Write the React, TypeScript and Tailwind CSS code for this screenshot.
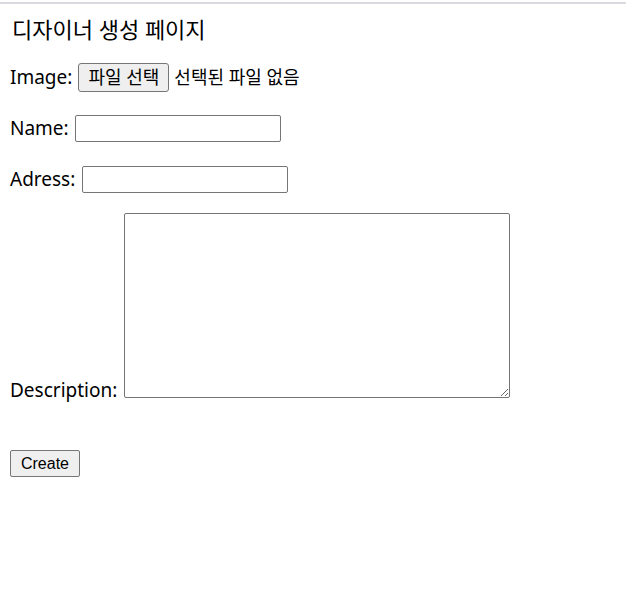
import React from "react";

const labelFont = "[font-family:'Noto_Sans','Noto_Sans_CJK_KR',sans-serif]";

const App = () => {
  return (
    <div className="min-h-[591px] bg-white text-black">
      <div className="mt-[2px] border-t-2 border-[#dcdae0]" />
      <div className={`px-[10px] ${labelFont}`}>
        {/* title */}
        <h1 className="pt-[11px] pl-[2px] text-[22px] leading-[28px] font-normal">
          디자이너 생성 페이지
        </h1>

        {/* image */}
        <div className="mt-[19px] flex items-center h-[30px] text-[19px]">
          <span>Image:</span>
          <button className="ml-[6px] h-[29px] w-[91px] rounded-[3px] border border-[#767676] bg-[#efefef] text-[18px] leading-none">
            파일 선택
          </button>
          <span className="ml-[5px] text-[18px]">선택된 파일 없음</span>
        </div>

        {/* name */}
        <div className="mt-[21px] flex items-center h-[30px] text-[19px]">
          <span>Name:</span>
          <input className="ml-[6px] w-[206px] h-[27px] rounded-[2px] border border-[#767676] bg-white" />
        </div>

        {/* adress */}
        <div className="mt-[21px] flex items-center h-[30px] text-[19px]">
          <span>Adress:</span>
          <input className="ml-[7px] w-[206px] h-[27px] rounded-[2px] border border-[#767676] bg-white" />
        </div>

        {/* description */}
        <div className="mt-[19px] flex items-end text-[19px]">
          <span className="leading-[22px] mb-[-3px]">Description:</span>
          <textarea className="ml-[7px] w-[386px] h-[185px] rounded-[2px] border border-[#767676] bg-white resize" />
        </div>

        {/* submit */}
        <button className="mt-[52px] w-[70px] h-[27px] rounded-[2px] border border-[#767676] bg-[#efefef] text-[16px] leading-none [font-family:'Liberation_Sans',Arial,sans-serif]">
          Create
        </button>
      </div>
    </div>
  );
};

export default App;
